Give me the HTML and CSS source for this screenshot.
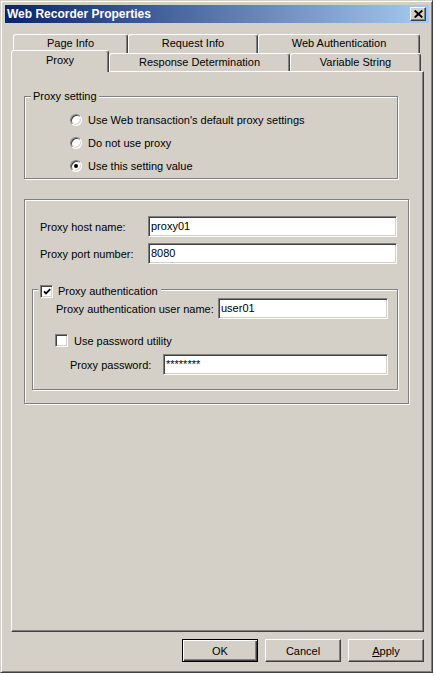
FILE: index.html
```html
<!DOCTYPE html>
<html>
<head>
<meta charset="utf-8">
<title>Web Recorder Properties</title>
<link rel="stylesheet" href="styles.css">
</head>
<body>
<div class="window">
  <div class="titlebar">
    <span class="title">Web Recorder Properties</span>
    <span class="close"><svg width="9" height="8" viewBox="0 0 9 8"><path d="M0.7 0.5 L8.3 7.5 M8.3 0.5 L0.7 7.5" stroke="#000" stroke-width="1.9" fill="none"/></svg></span>
  </div>
  <div class="body">
    <div class="tabs">
      <div class="tabrow back">
        <div class="tab w-page">Page Info</div>
        <div class="tab w-request">Request Info</div>
        <div class="tab w-webauth">Web Authentication</div>
      </div>
      <div class="tabrow front">
        <div class="tab selected w-proxy">Proxy</div>
        <div class="tab w-response">Response Determination</div>
        <div class="tab w-variable">Variable String</div>
      </div>
    </div>
    <div class="panel">
      <div class="group g-setting">
        <div class="legend">Proxy setting</div>
        <div class="options">
          <div class="radio-row"><span class="radio"></span><span>Use Web transaction's default proxy settings</span></div>
          <div class="radio-row"><span class="radio"></span><span>Do not use proxy</span></div>
          <div class="radio-row"><span class="radio on"></span><span>Use this setting value</span></div>
        </div>
      </div>
      <div class="group g-server">
        <div class="field-row">
          <span class="lbl lbl-host">Proxy host name:</span>
          <span class="input in-host">proxy01</span>
        </div>
        <div class="field-row">
          <span class="lbl lbl-host">Proxy port number:</span>
          <span class="input in-host">8080</span>
        </div>
        <div class="group g-auth">
          <div class="legend check-legend"><span class="check"><svg width="8" height="7" viewBox="0 0 8 7"><path d="M1 3.3 L3 5.4 L7.2 1.2" stroke="#000" stroke-width="1.8" fill="none"/></svg></span><span>Proxy authentication</span></div>
          <div class="field-row user-row">
            <span class="lbl lbl-user">Proxy authentication user name:</span>
            <span class="input in-user">user01</span>
          </div>
          <div class="check-row">
            <span class="check"></span><span>Use password utility</span>
          </div>
          <div class="field-row pass-row">
            <span class="lbl lbl-pass">Proxy password:</span>
            <span class="input in-pass">********</span>
          </div>
        </div>
      </div>
    </div>
    <div class="buttons">
      <button class="btn default">OK</button>
      <button class="btn">Cancel</button>
      <button class="btn"><span class="ul">A</span>pply</button>
    </div>
  </div>
</div>
</body>
</html>
```
FILE: styles.css
```css
body {
  margin: 0;
  background: #ffffff;
  font-family: "Liberation Sans", Arial, sans-serif;
  font-size: 11px;
  color: #000;
}

.window {
  box-sizing: border-box;
  width: 433px;
  height: 673px;
  background: #d4d0c8;
  border: 1px solid;
  border-color: #d4d0c8 #404040 #404040 #d4d0c8;
  box-shadow: inset 1px 1px #ffffff, inset -1px -1px #808080;
  padding: 4px 3px 3px 4px;
}

.titlebar {
  height: 18px;
  display: flex;
  align-items: center;
  justify-content: space-between;
  background: linear-gradient(to right, #0a246a, #a6caf0);
  padding: 0 3px 0 2px;
}

.title {
  color: #fff;
  font-weight: bold;
  font-size: 12px;
  line-height: 18px;
}

.close {
  box-sizing: border-box;
  width: 16px;
  height: 14px;
  background: #d4d0c8;
  border: 1px solid;
  border-color: #fff #404040 #404040 #fff;
  box-shadow: inset -1px -1px #808080;
  display: flex;
  align-items: center;
  justify-content: center;
}

.close svg { display: block; }

.body {
  padding: 11px 5px 0 6px;
}

.tabrow {
  display: flex;
}

.back {
  height: 19px;
  margin-left: 2px;
}

.front {
  height: 21px;
  margin-top: -3px;
  align-items: flex-end;
}

.tab {
  box-sizing: border-box;
  background: #d4d0c8;
  border-top: 1px solid #fff;
  border-left: 1px solid #fff;
  border-right: 1px solid #404040;
  border-radius: 3px 3px 0 0;
  box-shadow: inset -1px 0 #808080;
  text-align: center;
  white-space: nowrap;
  height: 19px;
  line-height: 17px;
}

.front .tab {
  height: 18px;
}

.front .tab.selected {
  height: 22px;
  line-height: 18px;
  margin-bottom: -1px;
  position: relative;
  z-index: 1;
}

.w-page { width: 115px; }
.w-request { width: 130px; }
.w-webauth { width: 162px; }
.w-proxy { width: 98px; }
.w-response { width: 181px; }
.w-variable { width: 131px; }

.panel {
  box-sizing: border-box;
  height: 561px;
  border: 1px solid;
  border-color: #fff #404040 #404040 #fff;
  box-shadow: inset -1px -1px #808080;
  padding: 24px 0 0 12px;
}

.group {
  box-sizing: border-box;
  border: 1px solid #808080;
  box-shadow: inset 1px 1px #fff, 1px 1px #fff;
}

.legend {
  width: fit-content;
  background: #d4d0c8;
  padding: 0 2px;
  line-height: 13px;
  margin-top: -7px;
  margin-left: 6px;
}

.g-setting {
  width: 374px;
}

.options {
  margin-top: 5px;
  padding-bottom: 1px;
}

.radio-row {
  display: flex;
  align-items: center;
  height: 23px;
  padding-left: 45px;
  gap: 6px;
}

.radio {
  box-sizing: border-box;
  width: 12px;
  height: 12px;
  border-radius: 50%;
  background: #fff;
  border: 1px solid;
  border-color: #808080 #fff #fff #808080;
  box-shadow: inset 1px 1px #404040, inset -1px -1px #d4d0c8;
  display: flex;
  align-items: center;
  justify-content: center;
}

.radio.on::after {
  content: "";
  width: 4px;
  height: 4px;
  border-radius: 50%;
  background: #000;
}

.g-server {
  width: 385px;
  margin-top: 20px;
  padding: 16px 11px 13px 15px;
}

.field-row {
  display: flex;
  align-items: center;
  height: 21px;
}

.field-row + .field-row {
  margin-top: 6px;
}

.lbl {
  white-space: nowrap;
}

.lbl-host { width: 108px; }
.lbl-user { width: 162px; }
.lbl-pass { width: 93px; }

.input {
  box-sizing: border-box;
  height: 21px;
  line-height: 19px;
  background: #fff;
  border: 1px solid;
  border-color: #808080 #fff #fff #808080;
  box-shadow: inset 1px 1px #404040, inset -1px -1px #d4d0c8;
  padding-left: 2px;
}

.in-host { width: 249px; }
.in-user { width: 170px; }
.in-pass { width: 225px; }

.g-auth {
  width: 366px;
  margin-top: 25px;
  margin-left: -8px;
  padding: 0 8px 14px 0;
}

.check-legend {
  display: flex;
  align-items: center;
  gap: 5px;
  height: 13px;
  margin-top: -5px;
  margin-left: 5px;
  padding: 0 3px 0 2px;
}

.check {
  box-sizing: border-box;
  width: 13px;
  height: 13px;
  background: #fff;
  border: 1px solid;
  border-color: #808080 #fff #fff #808080;
  box-shadow: inset 1px 1px #404040, inset -1px -1px #d4d0c8;
  display: flex;
  align-items: center;
  justify-content: center;
}

.check svg { display: block; }

.user-row {
  padding-left: 23px;
}

.check-row {
  display: flex;
  align-items: center;
  gap: 6px;
  height: 13px;
  margin-top: 15px;
  padding-left: 22px;
}

.pass-row {
  margin-top: 7px;
  padding-left: 37px;
}

.buttons {
  display: flex;
  justify-content: flex-end;
  gap: 7px;
  margin-top: 7px;
}

.btn {
  box-sizing: border-box;
  width: 76px;
  height: 23px;
  margin: 0;
  padding: 0;
  font: inherit;
  color: #000;
  background: #d4d0c8;
  border: 1px solid;
  border-color: #fff #404040 #404040 #fff;
  box-shadow: inset -1px -1px #808080;
  border-radius: 0;
}

.btn.default {
  border: 1px solid #000;
  box-shadow: inset 1px 1px #fff, inset -1px -1px #404040, inset -2px -2px #808080;
}

.ul { text-decoration: underline; }
```
